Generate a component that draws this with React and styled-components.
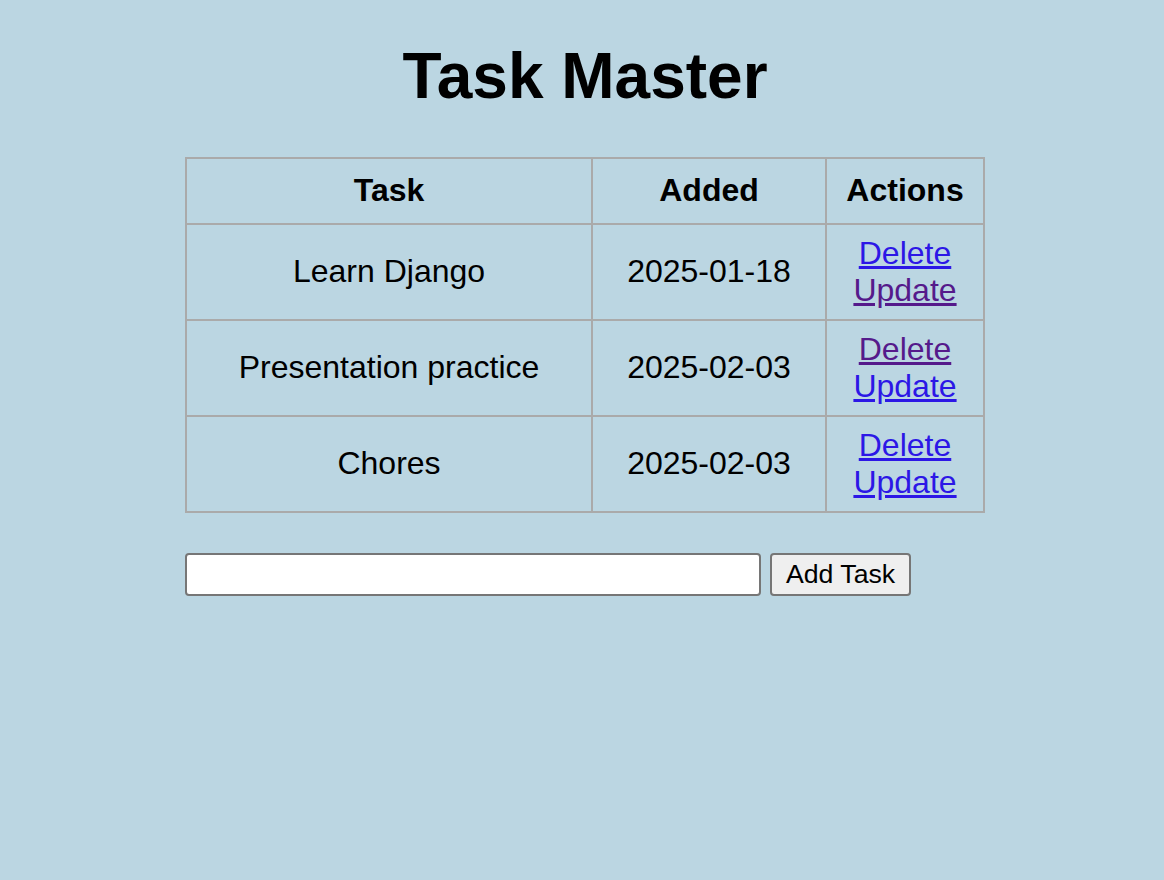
import React from "react";
import styled, { createGlobalStyle } from "styled-components";

const GlobalStyle = createGlobalStyle`
  html, body {
    margin: 0;
    padding: 0;
    background: #bbd6e2;
  }
  body {
    font-family: "Liberation Sans", Arial, sans-serif;
    font-size: 32px;
    color: #000;
  }
`;

const Page = styled.div`
  padding: 0 0 0 6px;
  min-height: 880px;
  box-sizing: border-box;
`;

const Title = styled.h1`
  margin: 39px 0 44px;
  font-size: 64px;
  line-height: 74px;
  font-weight: 700;
  text-align: center;
`;

const Content = styled.div`
  width: 800px;
  margin: 0 auto;
`;

const Table = styled.table`
  width: 800px;
  border-collapse: collapse;
  table-layout: fixed;
  border: 2px solid #aaaaaa;
`;

const HeadCell = styled.th`
  border: 2px solid #aaaaaa;
  padding: 13px 2px 14px;
  font-weight: 700;
  text-align: center;
  line-height: 36.8px;
  width: ${(p) => p.$w}px;
`;

const Cell = styled.td`
  border: 2px solid #aaaaaa;
  padding: 10px 2px;
  height: 74px;
  text-align: center;
  vertical-align: middle;
  line-height: 36.8px;
`;

const ActionLink = styled.a`
  display: block;
  color: ${(p) => (p.$visited ? "#551a8b" : "#2c17e6")};
  text-decoration: underline;
  cursor: pointer;
  width: fit-content;
  margin: 0 auto;
`;

const Form = styled.form`
  display: flex;
  align-items: center;
  gap: 9px;
  margin-top: 40px;
`;

const TextInput = styled.input`
  width: 576px;
  height: 43px;
  box-sizing: border-box;
  border: 2px solid #767676;
  border-radius: 4px;
  background: #fff;
  padding: 2px 4px;
  font-family: "Liberation Sans", Arial, sans-serif;
  font-size: 26.67px;
  outline: none;
`;

const Button = styled.button`
  height: 43px;
  box-sizing: border-box;
  border: 2px solid #767676;
  border-radius: 4px;
  background: #efefef;
  padding: 2px 14px;
  font-family: "Liberation Sans", Arial, sans-serif;
  font-size: 26.67px;
  color: #000;
  cursor: pointer;
`;

const tasks = [
  { name: "Learn Django", date: "2025-01-18", delVisited: false, updVisited: true },
  { name: "Presentation practice", date: "2025-02-03", delVisited: true, updVisited: false },
  { name: "Chores", date: "2025-02-03", delVisited: false, updVisited: false },
];

export default function App() {
  return (
    <>
      <GlobalStyle />
      <Page>
        <Title>Task Master</Title>
        <Content>
          <Table>
            <thead>
              <tr>
                <HeadCell $w={400}>Task</HeadCell>
                <HeadCell $w={228}>Added</HeadCell>
                <HeadCell $w={152}>Actions</HeadCell>
              </tr>
            </thead>
            <tbody>
              {tasks.map((t) => (
                <tr key={t.name}>
                  <Cell>{t.name}</Cell>
                  <Cell>{t.date}</Cell>
                  <Cell>
                    <ActionLink href="#" $visited={t.delVisited}>Delete</ActionLink>
                    <ActionLink href="#" $visited={t.updVisited}>Update</ActionLink>
                  </Cell>
                </tr>
              ))}
            </tbody>
          </Table>
          <Form onSubmit={(e) => e.preventDefault()}>
            <TextInput type="text" />
            <Button type="submit">Add Task</Button>
          </Form>
        </Content>
      </Page>
    </>
  );
}
